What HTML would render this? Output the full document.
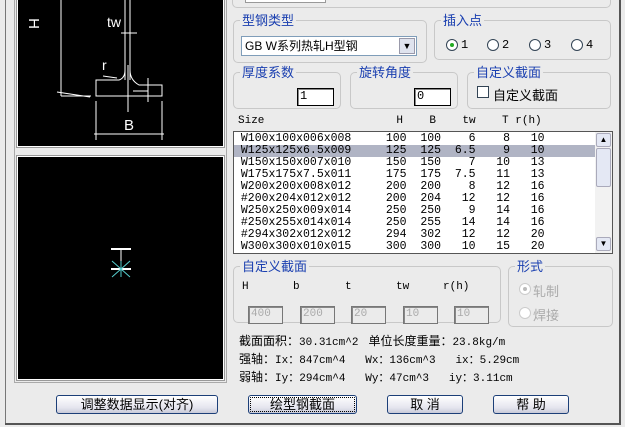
<!DOCTYPE html>
<html><head><style>
*{margin:0;padding:0;box-sizing:border-box}
body{width:625px;height:427px;background:#ebebeb;position:relative;overflow:hidden;font-family:"Liberation Sans","Noto Sans CJK SC",sans-serif;font-size:12px;color:#000}
.a{position:absolute}
.blk{background:#000;border:1px solid #fff;outline:1px solid #999}
.gb{position:absolute;border:1px solid #c8c8c8;border-radius:5px}
.gt{position:absolute;top:-8px;left:6px;background:#ebebeb;color:#1a3fb0;font-size:13px;padding:0 2px;line-height:15px}
.in{position:absolute;background:#fff;border:1px solid #000;box-shadow:inset 1px 1px 0 #888;font-family:"Liberation Mono",monospace;font-size:12px;padding-left:2px;line-height:15px}
.dis{background:#ebebeb;color:#aaa;border:1px solid #777;font-size:11px}
.btn{position:absolute;height:19px;border:1px solid #1c3f78;border-radius:3px;background:linear-gradient(#fff,#e4e4ee 70%,#c8cad8);text-align:center;font-size:13px;line-height:17px}
.mono{font-family:"Liberation Mono","Noto Sans CJK SC",monospace;font-size:11px}
.row{position:absolute;left:0;height:12px;line-height:12px;width:360px;white-space:pre;font-family:"Liberation Mono",monospace;font-size:11.5px}
.rad{position:absolute;width:12px;height:12px;border:1px solid #345;border-radius:50%;background:#fff}
.rl{position:absolute;font-family:"Liberation Mono",monospace;font-size:12px;line-height:14px}
</style></head><body>
<div class="a" style="left:5px;top:0;width:1px;height:424px;background:#777"></div>
<div class="a" style="left:619px;top:0;width:2px;height:425px;background:#555"></div>
<div class="a" style="left:5px;top:423px;width:616px;height:2px;background:#555"></div>
<div class="a" style="left:14px;top:0;width:1px;height:382px;background:#aaa"></div>
<div class="a" style="left:226px;top:0;width:1px;height:382px;background:#aaa"></div>
<div class="a" style="left:14px;top:382px;width:213px;height:1px;background:#aaa"></div>

<div class="a blk" style="left:17px;top:-2px;width:207px;height:149px">
<svg width="207" height="149" style="position:absolute;left:-1px;top:1px" stroke="#fff" fill="none" stroke-width="1">
<line x1="44" y1="0" x2="44" y2="96"/><line x1="40" y1="92" x2="73" y2="97"/><line x1="44" y1="96" x2="74" y2="96"/>
<line x1="108" y1="0" x2="108" y2="80"/><line x1="113" y1="0" x2="113" y2="80"/>
<line x1="104" y1="33" x2="120" y2="33"/>
<path d="M108 70 Q108 78 102 80 L79 80 L79 96 L145 96 L145 85 L122 85 Q113 80 113 70"/>
<line x1="86" y1="76" x2="100" y2="78"/>
<line x1="111" y1="65" x2="111" y2="112"/><line x1="79" y1="101" x2="79" y2="140"/><line x1="145" y1="101" x2="145" y2="140"/>
<line x1="77" y1="134" x2="147" y2="134"/><line x1="131" y1="78" x2="131" y2="102"/><line x1="116" y1="91" x2="131" y2="91"/>
</svg>
<div class="a" style="left:10px;top:16px;color:#fff;font-size:15px;transform:rotate(90deg)">H</div>
<div class="a" style="left:89px;top:15px;color:#fff;font-size:14px">tw</div>
<div class="a" style="left:84px;top:58px;color:#fff;font-size:14px">r</div>
<div class="a" style="left:106px;top:118px;color:#fff;font-size:15px">B</div>
</div>
<div class="a blk" style="left:17px;top:156px;width:207px;height:224px">
<svg width="207" height="224" style="position:absolute;left:0;top:0">
<line x1="93" y1="92" x2="113" y2="92" stroke="#fff" stroke-width="2"/><line x1="103" y1="92" x2="103" y2="113" stroke="#fff"/><line x1="93" y1="112" x2="113" y2="112" stroke="#fff" stroke-width="2"/>
<path d="M94 104L112 120M112 104L94 120M103 104V120" stroke="#5cc" />
</svg></div>
<div class="btn" style="left:56px;top:395px;width:162px">调整数据显示(对齐)</div>

<div class="gb" style="left:232px;top:-10px;width:379px;height:18px"></div>
<div class="a" style="left:245px;top:-5px;width:81px;height:8px;border:1px solid #999;background:#fff"></div>

<div class="gb" style="left:233px;top:20px;width:194px;height:43px"><span class="gt">型钢类型</span></div>
<div class="a" style="left:241px;top:36px;width:176px;height:20px;background:#fff;border:1px solid #7f9db9;font-size:12px;line-height:18px;padding-left:3px">GB W系列热轧H型钢</div>
<div class="a" style="left:399px;top:38px;width:16px;height:16px;border:1px solid #99a;background:#dfe3ee;font-size:9px;text-align:center;line-height:14px">&#9660;</div>

<div class="gb" style="left:434px;top:20px;width:177px;height:40px"><span class="gt">插入点</span></div>
<div class="rad" style="left:446px;top:39px"><div class="a" style="left:3px;top:3px;width:4px;height:4px;border-radius:50%;background:#2a2"></div></div>
<div class="rl" style="left:461px;top:38px">1</div>
<div class="rad" style="left:487px;top:39px"></div><div class="rl" style="left:502px;top:38px">2</div>
<div class="rad" style="left:529px;top:39px"></div><div class="rl" style="left:544px;top:38px">3</div>
<div class="rad" style="left:571px;top:39px"></div><div class="rl" style="left:586px;top:38px">4</div>

<div class="gb" style="left:233px;top:72px;width:108px;height:37px"><span class="gt">厚度系数</span></div>
<div class="in" style="left:297px;top:88px;width:37px;height:18px">1</div>
<div class="gb" style="left:350px;top:72px;width:108px;height:37px"><span class="gt">旋转角度</span></div>
<div class="in" style="left:414px;top:88px;width:37px;height:18px">0</div>
<div class="gb" style="left:467px;top:72px;width:144px;height:37px"><span class="gt">自定义截面</span></div>
<div class="a" style="left:477px;top:86px;width:12px;height:12px;border:1px solid #345;background:#fff"></div>
<div class="a" style="left:493px;top:85px;font-size:13px">自定义截面</div>

<div class="a mono" style="left:238px;top:115px;white-space:pre">Size                    H    B    tw    T r(h)</div>
<div class="a" style="left:233px;top:131px;width:380px;height:123px;background:#fff;border:1px solid #555">
<div style="position:relative">
<div class="row" style="top:1px"> W100x100x006x008     100  100    6    8   10</div>
<div class="row" style="top:13px;background:#b0b4c4;width:361px"> W125x125x6.5x009     125  125  6.5    9   10</div>
<div class="row" style="top:25px"> W150x150x007x010     150  150    7   10   13</div>
<div class="row" style="top:37px"> W175x175x7.5x011     175  175  7.5   11   13</div>
<div class="row" style="top:49px"> W200x200x008x012     200  200    8   12   16</div>
<div class="row" style="top:61px"> #200x204x012x012     200  204   12   12   16</div>
<div class="row" style="top:73px"> W250x250x009x014     250  250    9   14   16</div>
<div class="row" style="top:85px"> #250x255x014x014     250  255   14   14   16</div>
<div class="row" style="top:97px"> #294x302x012x012     294  302   12   12   20</div>
<div class="row" style="top:109px"> W300x300x010x015     300  300   10   15   20</div>
</div>
<div class="a" style="right:0;top:0;width:17px;height:121px;background:#f2f2f2">
<div class="a" style="left:1px;top:1px;width:15px;height:14px;border:1px solid #aab;border-radius:2px;background:#e4e8f4;font-size:8px;text-align:center;line-height:12px">&#9650;</div>
<div class="a" style="left:1px;top:16px;width:15px;height:39px;border:1px solid #aab;border-radius:2px;background:#e4e8f4"></div>
<div class="a" style="left:1px;top:105px;width:15px;height:14px;border:1px solid #aab;border-radius:2px;background:#e4e8f4;font-size:8px;text-align:center;line-height:12px">&#9660;</div>
</div></div>

<div class="gb" style="left:233px;top:266px;width:268px;height:57px"><span class="gt">自定义截面</span></div>
<div class="a mono" style="left:242px;top:281px">H</div><div class="a mono" style="left:293px;top:281px">b</div><div class="a mono" style="left:345px;top:281px">t</div><div class="a mono" style="left:396px;top:281px">tw</div><div class="a mono" style="left:443px;top:281px">r(h)</div>
<div class="in dis" style="left:248px;top:306px;width:35px;height:18px">400</div>
<div class="in dis" style="left:300px;top:306px;width:35px;height:18px">200</div>
<div class="in dis" style="left:351px;top:306px;width:35px;height:18px">20</div>
<div class="in dis" style="left:403px;top:306px;width:35px;height:18px">10</div>
<div class="in dis" style="left:454px;top:306px;width:35px;height:18px">10</div>
<div class="gb" style="left:508px;top:266px;width:105px;height:61px"><span class="gt" style="color:#1a3fb0">形式</span></div>
<div class="rad" style="left:519px;top:283px;border-color:#ccc"><div class="a" style="left:3px;top:3px;width:4px;height:4px;border-radius:50%;background:#bbb"></div></div>
<div class="a" style="left:533px;top:281px;color:#aaa;font-size:13px">轧制</div>
<div class="rad" style="left:519px;top:307px;border-color:#ccc"></div>
<div class="a" style="left:533px;top:305px;color:#aaa;font-size:13px">焊接</div>

<div class="a" style="left:239px;top:332px;font-size:12px;white-space:pre">截面面积：<span class="mono">30.31cm^2</span>   单位长度重量：<span class="mono">23.8kg/m</span></div>
<div class="a" style="left:239px;top:350px;font-size:12px;white-space:pre">强轴：<span class="mono">Ix：847cm^4   Wx：136cm^3   ix：5.29cm</span></div>
<div class="a" style="left:239px;top:368px;font-size:12px;white-space:pre">弱轴：<span class="mono">Iy：294cm^4   Wy：47cm^3   iy：3.11cm</span></div>

<div class="btn" style="left:248px;top:395px;width:109px;outline:1px dotted #000;outline-offset:-3px">绘型钢截面</div>
<div class="btn" style="left:387px;top:395px;width:76px">取 消</div>
<div class="btn" style="left:493px;top:395px;width:76px">帮 助</div>
</body></html>
